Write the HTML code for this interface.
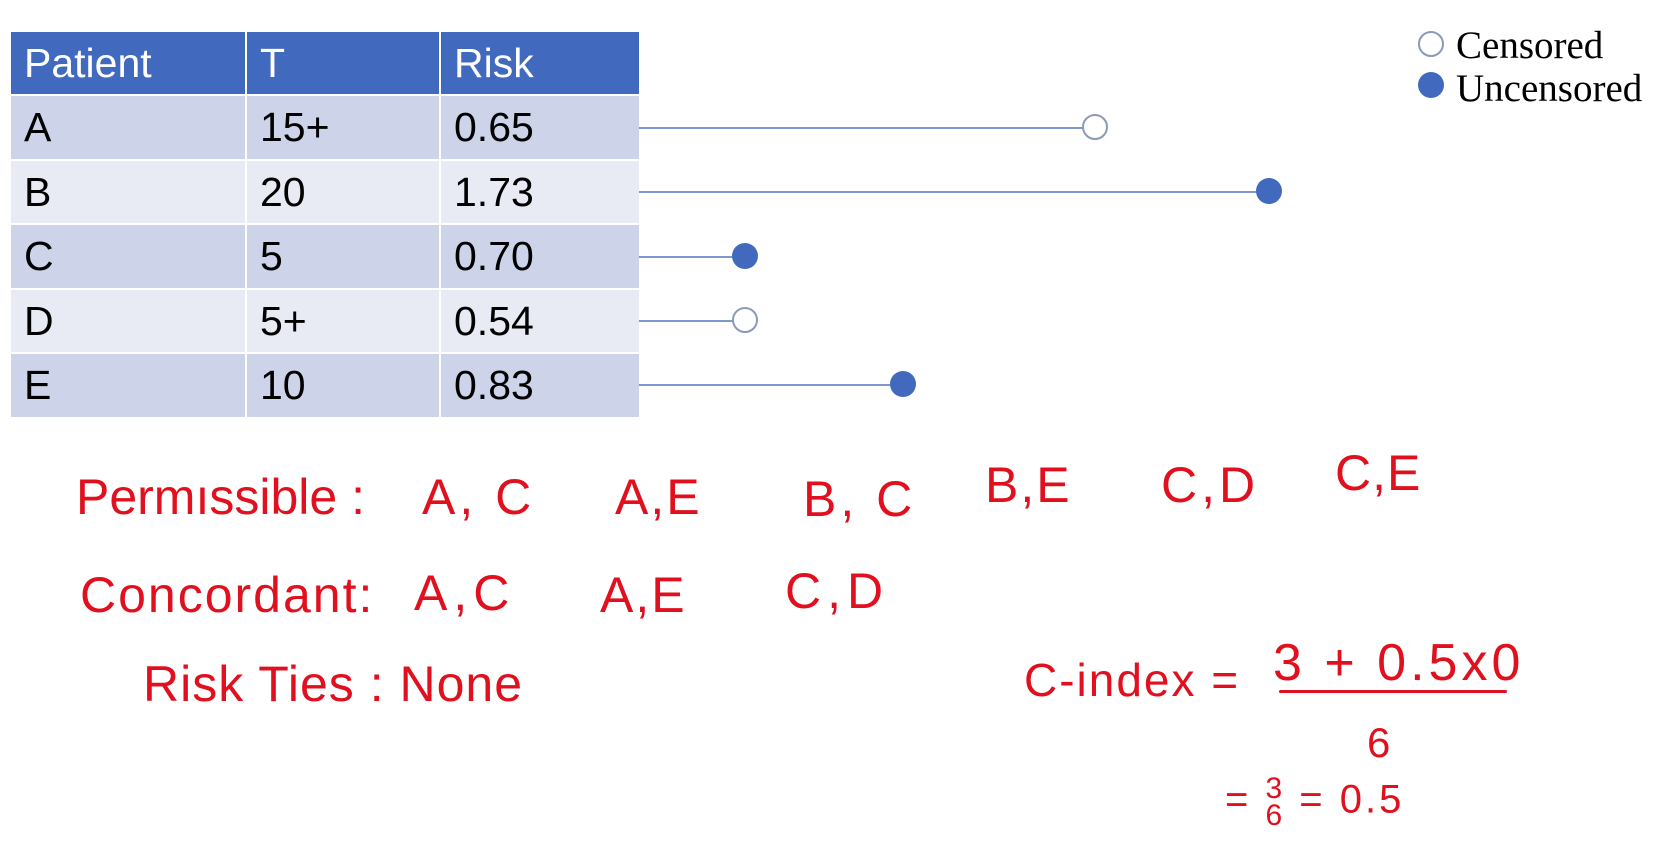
<!DOCTYPE html>
<html><head><style>
body{margin:0;width:1664px;height:863px;background:#fff;position:relative;overflow:hidden;font-family:"Liberation Sans",sans-serif}
.c{position:absolute;box-sizing:border-box;color:#000;font-size:41px;padding-left:13px;display:flex;align-items:center}
.h{background:#4169bd;color:#fff}
.d{background:#cdd3e8}
.l{background:#e8ebf4}
.r{position:absolute;color:#e0101e;font-family:"Liberation Sans",sans-serif;font-size:50px;white-space:nowrap;line-height:1;letter-spacing:3px}
.ln{position:absolute;height:2px;background:#7f98cc}
.dot{position:absolute;width:26px;height:26px;border-radius:50%;box-sizing:border-box}
.f{background:#4169bd}
.o{background:#fff;border:2px solid #8a9ab8}
.lg{position:absolute;font-family:"Liberation Serif",serif;font-size:39px}
</style></head><body>
<div class="c h" style="left:11px;top:32px;width:234px;height:62px">Patient</div>
<div class="c h" style="left:247px;top:32px;width:192px;height:62px">T</div>
<div class="c h" style="left:441px;top:32px;width:198px;height:62px">Risk</div>

<div class="c d" style="left:11px;top:96px;width:234px;height:63px">A</div>
<div class="c d" style="left:247px;top:96px;width:192px;height:63px">15+</div>
<div class="c d" style="left:441px;top:96px;width:198px;height:63px">0.65</div>
<div class="c l" style="left:11px;top:161px;width:234px;height:62px">B</div>
<div class="c l" style="left:247px;top:161px;width:192px;height:62px">20</div>
<div class="c l" style="left:441px;top:161px;width:198px;height:62px">1.73</div>
<div class="c d" style="left:11px;top:225px;width:234px;height:63px">C</div>
<div class="c d" style="left:247px;top:225px;width:192px;height:63px">5</div>
<div class="c d" style="left:441px;top:225px;width:198px;height:63px">0.70</div>
<div class="c l" style="left:11px;top:290px;width:234px;height:62px">D</div>
<div class="c l" style="left:247px;top:290px;width:192px;height:62px">5+</div>
<div class="c l" style="left:441px;top:290px;width:198px;height:62px">0.54</div>
<div class="c d" style="left:11px;top:354px;width:234px;height:63px">E</div>
<div class="c d" style="left:247px;top:354px;width:192px;height:63px">10</div>
<div class="c d" style="left:441px;top:354px;width:198px;height:63px">0.83</div>

<div class="ln" style="left:639px;top:127px;width:445px"></div><div class="dot o" style="left:1082px;top:114px"></div>
<div class="ln" style="left:639px;top:191px;width:620px"></div><div class="dot f" style="left:1256px;top:178px"></div>
<div class="ln" style="left:639px;top:256px;width:100px"></div><div class="dot f" style="left:732px;top:243px"></div>
<div class="ln" style="left:639px;top:320px;width:100px"></div><div class="dot o" style="left:732px;top:307px"></div>
<div class="ln" style="left:639px;top:384px;width:255px"></div><div class="dot f" style="left:890px;top:371px"></div>

<div class="dot o" style="left:1418px;top:31px"></div>
<div class="lg" style="left:1456px;top:23px">Censored</div>
<div class="dot f" style="left:1418px;top:72px"></div>
<div class="lg" style="left:1456px;top:66px">Uncensored</div>

<div class="r" style="left:76px;top:472px;letter-spacing:0px">Permıssible :</div>
<div class="r" style="left:422px;top:472px;letter-spacing:4px">A, C</div>
<div class="r" style="left:615px;top:472px;letter-spacing:2px">A,E</div>
<div class="r" style="left:803px;top:474px;letter-spacing:4px">B, C</div>
<div class="r" style="left:985px;top:460px;letter-spacing:2px">B,E</div>
<div class="r" style="left:1161px;top:460px;letter-spacing:4px">C,D</div>
<div class="r" style="left:1335px;top:448px;letter-spacing:1px">C,E</div>
<div class="r" style="left:80px;top:570px;letter-spacing:2px">Concordant:</div>
<div class="r" style="left:414px;top:568px;letter-spacing:6px">A,C</div>
<div class="r" style="left:600px;top:570px;letter-spacing:2px">A,E</div>
<div class="r" style="left:785px;top:566px;letter-spacing:6px">C,D</div>
<div class="r" style="left:143px;top:659px;letter-spacing:1px">Risk  Ties : None</div>
<div class="r" style="left:1024px;top:657px;font-size:46px;letter-spacing:2px">C-index =</div>
<div class="r" style="left:1273px;top:637px;font-size:52px;letter-spacing:4px">3 + 0.5x0</div>
<div style="position:absolute;left:1279px;top:690px;width:228px;height:3px;background:#e0101e;border-radius:2px"></div>
<div class="r" style="left:1367px;top:722px;font-size:42px">6</div>
<div class="r" style="left:1225px;top:775px;font-size:40px">= <span style="display:inline-block;text-align:center;line-height:0.9;font-size:30px;vertical-align:middle">3<br>6</span> = 0.5</div>
</body></html>
